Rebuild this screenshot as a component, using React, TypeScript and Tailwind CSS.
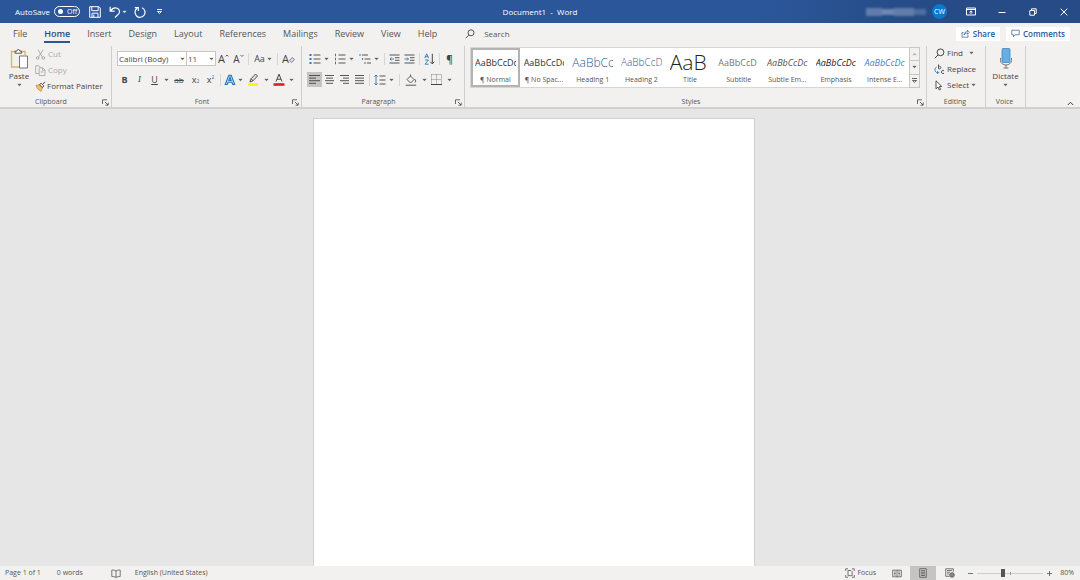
import type { ReactNode } from 'react';
import clsx from 'clsx';

interface StyleItem {
  label: string;
  sample: string;
  className: string;
}

const tabs = ['File', 'Home', 'Insert', 'Design', 'Layout', 'References', 'Mailings', 'Review', 'View', 'Help'];

const styleItems: StyleItem[] = [
  { label: '¶ Normal', sample: 'AaBbCcDc', className: 'text-[9px] text-[#333]' },
  { label: '¶ No Spac...', sample: 'AaBbCcDc', className: 'text-[9px] text-[#333]' },
  { label: 'Heading 1', sample: 'AaBbCc', className: 'text-[12px] font-light text-[#2f5c8f]' },
  { label: 'Heading 2', sample: 'AaBbCcD', className: 'text-[10px] font-light text-[#2f5c8f]' },
  { label: 'Title', sample: 'AaB', className: 'text-[21px] font-light text-[#222]' },
  { label: 'Subtitle', sample: 'AaBbCcD', className: 'text-[9px] text-[#777]' },
  { label: 'Subtle Em...', sample: 'AaBbCcDc', className: 'text-[9px] italic text-[#555]' },
  { label: 'Emphasis', sample: 'AaBbCcDc', className: 'text-[9px] italic text-[#222]' },
  { label: 'Intense E...', sample: 'AaBbCcDc', className: 'text-[9px] italic text-[#4a7ebb]' },
];

function Icon({ w = 12, h = 12, children }: { w?: number; h?: number; children: ReactNode }) {
  return (
    <svg width={w} height={h} viewBox={`0 0 ${w} ${h}`} fill="none" stroke="currentColor" className="shrink-0" aria-hidden="true">
      {children}
    </svg>
  );
}

function Caret() {
  return (
    <Icon w={5} h={4}>
      <path d="M.8 1.200h3.400L2.500 2.700z" fill="currentColor" strokeWidth=".4" />
    </Icon>
  );
}

function Tool({ label, className, children }: { label: string; className?: string; children: ReactNode }) {
  return (
    <button type="button" aria-label={label} className={clsx('flex h-[15px] shrink-0 items-center justify-center', className ?? 'w-[15px]')}>
      {children}
    </button>
  );
}

function More({ label }: { label: string }) {
  return (
    <Tool label={label} className="w-2">
      <Caret />
    </Tool>
  );
}

function Divider() {
  return <span className="mx-[2px] h-3 w-px shrink-0 bg-[#d8d6d4]" />;
}

function Group({ title, launcher, className, children }: { title: string; launcher?: boolean; className?: string; children: ReactNode }) {
  return (
    <section aria-label={title} className={clsx('flex flex-col border-r border-[#d0cecc]', className)}>
      <div className="h-[51px]">{children}</div>
      <div className="flex h-[10px] items-center pr-[2px]">
        <span className="flex-1 text-center text-[7px] leading-[10px] text-[#555]">{title}</span>
        {launcher && (
          <button type="button" aria-label={`${title} settings`}>
            <Icon w={7} h={7}>
              <path d="M.5 5V.8H5M3 3l3 3M6.200 3.500v2.700H3.500" strokeWidth=".8" />
            </Icon>
          </button>
        )}
      </div>
    </section>
  );
}

function Lines({ rows }: { rows: [number, number][] }) {
  return (
    <Icon w={11} h={11}>
      {rows.map(([x1, x2], i) => (
        <path key={i} d={`M${x1} ${1.5 + i * 2.6}H${x2}`} strokeWidth=".9" />
      ))}
    </Icon>
  );
}

function TitleBar() {
  return (
    <header className="grid h-[23px] shrink-0 grid-cols-[1fr_auto_1fr] items-center bg-linear-to-r from-[#2b579a] from-70% to-[#264b86] to-85% text-white">
      <div className="flex items-center pl-[15px]">
        <label className="flex items-center gap-1 text-[8px]">
          AutoSave
          <input type="checkbox" role="switch" className="peer sr-only" />
          <span className="flex h-[11px] w-[26px] items-center gap-1 rounded-full border border-white px-[3px] text-[7px] leading-none">
            <span className="size-[5px] shrink-0 rounded-full bg-white" />
            Off
          </span>
        </label>
        <button type="button" aria-label="Save" className="ml-[9px]">
          <Icon>
            <path d="M.7.700h9.200l1.400 1.400v9.200H.7zM2.800.7v4h6.400v-4M3 11.300V7.200h6v4.100M4.800 8.500v2.800" />
          </Icon>
        </button>
        <button type="button" aria-label="Undo" className="ml-2">
          <Icon>
            <path d="M1.200.800v4.400h4.400M1.400 5C3.300 2.200 6 1.300 8.200 2.200c2.800 1.200 2.900 4.200 1.200 6L6 11.500" strokeWidth="1.200" />
          </Icon>
        </button>
        <More label="Undo history" />
        <button type="button" aria-label="Repeat" className="ml-[5px]">
          <Icon>
            <path d="M8 1.700a5 5 0 1 1-5 .6M.8 1.600h3.500v3.500" strokeWidth="1.200" />
          </Icon>
        </button>
        <button type="button" aria-label="Customize Quick Access Toolbar" className="ml-[10px]">
          <Icon w={7} h={7}>
            <path d="M1 1.500h5M1.500 3.500h4L3.500 5.500z" strokeWidth=".9" />
          </Icon>
        </button>
      </div>
      <h1 className="text-[8px] font-medium">Document1&nbsp; -&nbsp; Word</h1>
      <div className="flex items-center justify-end">
        <div className="mr-[6px] flex h-[9px] w-[60px] items-center opacity-80 blur-[1px]" aria-hidden="true">
          <span className="h-2 w-4 bg-[#7088b3]" />
          <span className="h-[6px] w-3 bg-[#8297bd]" />
          <span className="h-2 w-5 bg-[#7189b4]" />
          <span className="h-[6px] w-3 bg-[#5a76a6]" />
        </div>
        <button type="button" className="mr-2 size-[15px] rounded-full bg-[#0b78d0] text-[7px] leading-[15px]">CW</button>
        <button type="button" aria-label="Ribbon Display Options" className="flex w-[31px] justify-center">
          <Icon w={10} h={9}>
            <path d="M.5 1h9v7h-9zM.5 2.500h9M5 7V4M3.500 5.300L5 3.900l1.500 1.400" />
          </Icon>
        </button>
        <button type="button" aria-label="Minimize" className="flex w-[31px] justify-center">
          <Icon w={8} h={8}><path d="M.5 4.500h7" /></Icon>
        </button>
        <button type="button" aria-label="Restore" className="flex w-[31px] justify-center">
          <Icon w={8} h={8}><path d="M.8 2.500h4.700v4.700H.8zM2.500 2.500V.800h4.700v4.700H5.500" /></Icon>
        </button>
        <button type="button" aria-label="Close" className="flex w-8 justify-center">
          <Icon w={8} h={8}><path d="M.7.700l6.600 6.600M7.300.700L.7 7.300" /></Icon>
        </button>
      </div>
    </header>
  );
}

function TabBar() {
  return (
    <nav className="flex h-[23px] shrink-0 items-center pr-[10px] pb-[2px] pl-[13px] text-[#555]">
      <div className="flex gap-[17px] text-[9px] leading-[14px]">
        {tabs.map((tab) => (
          <button
            key={tab}
            type="button"
            className={clsx('border-b-2 pt-[2px]', tab === 'Home' ? 'border-[#2b579a] font-semibold text-[#2b4a80]' : 'border-transparent')}
          >
            {tab}
          </button>
        ))}
      </div>
      <label className="ml-7 flex items-center gap-[9px]">
        <Icon w={10} h={10}>
          <circle cx="6" cy="3.800" r="3" />
          <path d="M3.800 6L.7 9.200" />
        </Icon>
        <input type="search" aria-label="Search" placeholder="Search" className="w-20 text-[8px] outline-none placeholder:text-[#555]" />
      </label>
      <div className="ml-auto flex gap-[6px] text-[8px] font-semibold text-[#2b579a]">
        <button type="button" className="flex h-[14px] items-center gap-[3px] bg-white px-[5px]">
          <Icon w={9} h={9}>
            <path d="M2.500 3.500H1v4.700h6V6M3 6c.2-2.300 1.500-3.300 3.500-3.300V1.200L8.500 3.400 6.500 5.300V4C5 4 4 4.500 3 6z" strokeWidth=".7" />
          </Icon>
          Share
        </button>
        <button type="button" className="flex h-[14px] items-center gap-[3px] bg-white px-[5px]">
          <Icon w={9} h={9}>
            <path d="M.8 1.200h7.400v4.600H4.300L2.500 7.700V5.800H.8z" strokeWidth=".7" />
          </Icon>
          Comments
        </button>
      </div>
    </nav>
  );
}

function ClipboardGroup() {
  return (
    <Group title="Clipboard" launcher className="w-[112px]">
      <div className="flex text-[8px] leading-[14px]">
        <button type="button" className="ml-2 flex w-[22px] flex-col items-center pt-[2px]">
          <Icon w={20} h={21}>
            <path d="M6 3.500H2.500v15.500H10M12.500 3.500H16v3.500" stroke="#d9b75a" strokeWidth="1.300" />
            <path d="M6 5.200V3.200h1.700a1.600 1.600 0 0 1 3.200 0h1.700v2z" fill="#fff" strokeWidth=".9" />
            <path d="M10.500 8h8v12h-8z" fill="#fff" stroke="#666" strokeWidth=".9" />
          </Icon>
          <span>Paste</span>
          <Caret />
        </button>
        <div className="ml-[5px] flex flex-col items-start gap-[2px] pt-px">
          <button type="button" disabled className="flex items-center gap-[2px] text-[#aaa]">
            <Icon w={11} h={11}>
              <path d="M3 .8l4.200 7M8 .8l-4.200 7" />
              <circle cx="2.700" cy="9" r="1.300" />
              <circle cx="8.300" cy="9" r="1.300" />
            </Icon>
            Cut
          </button>
          <button type="button" disabled className="flex items-center gap-[2px] text-[#aaa]">
            <Icon w={11} h={11}>
              <path d="M4 8.500H.7V.8H4l1.500 1.500M4.200 2.800h3.500l2.300 2.300v5.400H4.200zM7.500 2.800v2.500H10M5.500 7h3" strokeWidth=".9" />
            </Icon>
            Copy
          </button>
          <button type="button" className="flex items-center gap-px whitespace-nowrap">
            <Icon w={11} h={11}>
              <path d="M1 4.500l3.500-.8 3 3L6 10.300C3.500 9 2 7.500 1 4.500z" fill="#f0c070" stroke="#d8983f" />
              <path d="M4.500 3.700L6.200 2.300l2.600 2.600-1.400 1.700zM7.500 3.500L10 .8" fill="#fff" />
            </Icon>
            Format Painter
          </button>
        </div>
      </div>
    </Group>
  );
}

function FontGroup() {
  return (
    <Group title="Font" launcher className="w-[190px]">
      <div className="flex flex-col gap-[6px] pt-[5px] pl-[5px]">
        <div className="flex h-[15px] items-center">
          <div className="grid h-[15px] w-[70px] items-center border border-[#c8c6c4] bg-white">
            <select aria-label="Font" className="col-start-1 row-start-1 w-full appearance-none pl-px text-[8px] outline-none">
              <option>Calibri (Body)</option>
            </select>
            <span className="pointer-events-none col-start-1 row-start-1 mr-px justify-self-end"><Caret /></span>
          </div>
          <div className="grid h-[15px] w-[29px] items-center border border-l-0 border-[#c8c6c4] bg-white">
            <select aria-label="Font size" className="col-start-1 row-start-1 w-full appearance-none pl-px text-[8px] outline-none">
              <option>11</option>
            </select>
            <span className="pointer-events-none col-start-1 row-start-1 mr-px justify-self-end"><Caret /></span>
          </div>
          <Tool label="Increase font size">
            <span className="text-[11px] leading-none">A</span>
            <Icon w={4} h={9}><path d="M.5 2.500L2 1l1.500 1.500" strokeWidth=".8" /></Icon>
          </Tool>
          <Tool label="Decrease font size">
            <span className="text-[10px] leading-none">A</span>
            <Icon w={4} h={9}><path d="M.5 1L2 2.500 3.500 1" strokeWidth=".8" /></Icon>
          </Tool>
          <Divider />
          <Tool label="Change case" className="w-[24px] gap-[2px]">
            <span className="text-[9px] leading-none">Aa</span>
            <Caret />
          </Tool>
          <Divider />
          <Tool label="Clear all formatting" className="w-[17px]">
            <span className="text-[11px] leading-none">A</span>
            <Icon w={6} h={10}>
              <path d="M.5 6.500l2.700-3 2.300 2-2.700 3z" fill="#e4d8ea" stroke="#6f6480" strokeWidth=".8" />
            </Icon>
          </Tool>
        </div>
        <div className="flex h-[15px] items-center text-[9px] leading-none">
          <Tool label="Bold"><b>B</b></Tool>
          <Tool label="Italic"><i className="font-serif">I</i></Tool>
          <Tool label="Underline"><u>U</u></Tool>
          <More label="Underline style" />
          <Tool label="Strikethrough" className="w-[18px]"><s className="text-[8px]">ab</s></Tool>
          <Tool label="Subscript">x<sub className="text-[5px] text-[#2b6cb0]">2</sub></Tool>
          <Tool label="Superscript">x<sup className="text-[5px] text-[#2b6cb0]">2</sup></Tool>
          <Divider />
          <Tool label="Text effects" className="w-[13px]">
            <Icon w={12} h={12}>
              <path d="M1.200 10.500L4.800 1.200h2.400l3.600 9.300H8.700l-.8-2.300H4.100l-.8 2.300zM4.900 6.400h2.200L6 3.200z" fill="#c5e0f5" stroke="#2375ba" strokeWidth="1.100" />
            </Icon>
          </Tool>
          <More label="Text effect options" />
          <Tool label="Text highlight color" className="w-[18px]">
            <Icon w={12} h={13}>
              <path d="M1 11.500h10" stroke="#fff200" strokeWidth="2.600" />
              <path d="M3 9l1-3.200L8.500 1l2 2L6 7.800z" fill="#ddd" strokeWidth=".9" />
              <path d="M4 5.800l2 2" strokeWidth=".9" />
            </Icon>
          </Tool>
          <More label="Highlight options" />
          <Tool label="Font color" className="w-[17px]">
            <Icon w={12} h={13}>
              <path d="M.5 11.500h11" stroke="#e02020" strokeWidth="2.600" />
              <path d="M3 8.500L6 1.200l3 7.300M4 6.200h4" />
            </Icon>
          </Tool>
          <More label="Font color options" />
        </div>
      </div>
    </Group>
  );
}

function ListIcon({ numbered }: { numbered?: boolean }) {
  return (
    <Icon w={12} h={12}>
      {[2, 6, 10].map((y) => (
        <g key={y}>
          <path d={numbered ? `M1.500 ${y - 1.3}v2.600` : `M.5 ${y}h2`} stroke="#2b7bb0" strokeWidth={numbered ? 1 : 2} />
          <path d={`M4.500 ${y}h7`} strokeWidth=".9" />
        </g>
      ))}
    </Icon>
  );
}

function ParagraphGroup() {
  return (
    <Group title="Paragraph" launcher className="w-[163px]">
      <div className="flex flex-col gap-[6px] pt-[5px] pl-[5px]">
        <div className="flex h-[15px] items-center">
          <Tool label="Bullets"><ListIcon /></Tool>
          <More label="Bullet library" />
          <span className="w-[2px]" />
          <Tool label="Numbering"><ListIcon numbered /></Tool>
          <More label="Numbering library" />
          <span className="w-[2px]" />
          <Tool label="Multilevel list">
            <Icon w={12} h={12}>
              <path d="M1 1v2M3.500 5v2M6 9v2" stroke="#2b7bb0" />
              <path d="M3 2h6M5.500 6h6M8 10h4" strokeWidth=".9" />
            </Icon>
          </Tool>
          <More label="Multilevel library" />
          <span className="w-[2px]" />
          <Divider />
          <Tool label="Decrease indent">
            <Icon w={11} h={10}>
              <path d="M.5 1h10M6 3.700h4.500M6 6.300h4.500M.5 9h10" strokeWidth=".9" />
              <path d="M5 5H1M2.500 3.500L1 5l1.500 1.500" stroke="#2b7bb0" strokeWidth=".9" />
            </Icon>
          </Tool>
          <Tool label="Increase indent">
            <Icon w={11} h={10}>
              <path d="M.5 1h10M6 3.700h4.500M6 6.300h4.500M.5 9h10" strokeWidth=".9" />
              <path d="M.5 5h4M3 3.500L4.500 5 3 6.500" stroke="#2b7bb0" strokeWidth=".9" />
            </Icon>
          </Tool>
          <Divider />
          <Tool label="Sort">
            <Icon w={11} h={12}>
              <path d="M.7 5.200L2.700.8l2 4.400M1.500 3.700h2.500" stroke="#2b7bb0" strokeWidth=".9" />
              <path d="M1 7h3.500L1 11.200h3.700" stroke="#2b7bb0" strokeWidth=".9" />
              <path d="M8.300.8v10M6.200 8.700l2.100 2.200 2.100-2.200" />
            </Icon>
          </Tool>
          <Divider />
          <Tool label="Show formatting marks">
            <span className="text-[10px] leading-none font-semibold">¶</span>
          </Tool>
        </div>
        <div className="flex h-[15px] items-center">
          <Tool label="Align left" className="w-[15px] bg-[#c6c4c2]"><Lines rows={[[0, 11], [0, 7], [0, 11], [0, 7]]} /></Tool>
          <Tool label="Center"><Lines rows={[[1, 10], [2, 9], [1, 10], [2, 9]]} /></Tool>
          <Tool label="Align right"><Lines rows={[[1, 10], [4, 10], [1, 10], [4, 10]]} /></Tool>
          <Tool label="Justify"><Lines rows={[[1, 10], [1, 10], [1, 10], [1, 10]]} /></Tool>
          <Divider />
          <Tool label="Line spacing">
            <Icon w={12} h={12}>
              <path d="M2 1v10M.5 2.700L2 1l1.500 1.700M.5 9.300L2 11l1.500-1.700" stroke="#2b7bb0" strokeWidth=".9" />
              <path d="M5.500 2h6M5.500 6h6M5.500 10h6" strokeWidth=".9" />
            </Icon>
          </Tool>
          <More label="Line spacing options" />
          <span className="w-[2px]" />
          <Divider />
          <Tool label="Shading" className="w-[18px]">
            <Icon w={12} h={12}>
              <path d="M2 5.500L5.500 2l3.500 3.500L5.500 9zM5.500 2V.5M9.500 5c1.300 1.500 1.500 3 .5 3.500M.7 11.200h10.500" strokeWidth=".9" />
            </Icon>
          </Tool>
          <More label="Shading options" />
          <Tool label="Borders" className="w-[17px]">
            <Icon w={11} h={11}>
              <path d="M.5.500h10v10M.5.500v10M5.500.500v10M.5 5.500h10" strokeDasharray="1 1" strokeWidth=".6" />
              <path d="M0 10.500h11" />
            </Icon>
          </Tool>
          <More label="Border options" />
        </div>
      </div>
    </Group>
  );
}

function StylesGroup() {
  return (
    <Group title="Styles" launcher className="min-w-0 flex-1">
      <div className="flex h-[42px] pt-px pr-[6px] pl-[5px]">
        <div className="flex min-w-0 flex-1 border border-r-0 border-[#d8d6d4] bg-white">
          {styleItems.map((item, i) => (
            <button
              key={item.label}
              type="button"
              className={clsx('flex min-w-0 flex-1 flex-col border-2 px-[2px]', i === 0 ? 'border-[#b5b3b1]' : 'border-transparent')}
            >
              <span className={clsx('flex h-[25px] w-full items-center overflow-hidden leading-[25px] whitespace-nowrap', item.className)}>
                {item.sample}
              </span>
              <span className="w-full text-center text-[7px] leading-[10px] whitespace-nowrap text-[#555]">{item.label}</span>
            </button>
          ))}
        </div>
        <div className="flex w-[11px] flex-col divide-y divide-[#c8c6c4] border border-[#c8c6c4]">
          <button type="button" aria-label="Previous styles" className="flex flex-1 items-center justify-center text-[#aaa]">
            <Icon w={5} h={4}><path d="M.8 2.800h3.400L2.500 1.300z" fill="currentColor" strokeWidth=".4" /></Icon>
          </button>
          <button type="button" aria-label="Next styles" className="flex flex-1 items-center justify-center">
            <Caret />
          </button>
          <button type="button" aria-label="More styles" className="flex flex-1 items-center justify-center">
            <Icon w={7} h={7}><path d="M1 1.500h5M1.500 3.500h4L3.500 5.500z" strokeWidth=".8" /></Icon>
          </button>
        </div>
      </div>
    </Group>
  );
}

function EditingGroup() {
  return (
    <Group title="Editing" className="w-[59px]">
      <div className="flex flex-col items-start gap-[2px] pl-[7px] text-[8px] leading-[14px]">
        <button type="button" className="flex items-center gap-[2px]">
          <Icon w={11} h={11}>
            <circle cx="6.500" cy="4.300" r="3.400" />
            <path d="M4 7L.8 10.200" />
          </Icon>
          Find
          <span className="ml-1"><Caret /></span>
        </button>
        <button type="button" className="flex items-center gap-[2px]">
          <Icon w={11} h={11}>
            <path d="M4.500.5v4.200M4.500 3a1.300 1.300 0 1 1 0 1.300M10 6.700a1.600 1.600 0 1 0 0 2.600" strokeWidth=".9" />
            <path d="M2.500 3C.5 4.200.5 7.500 2.500 8.500h2M3.200 7l1.500 1.500L3.200 10" stroke="#2375ba" strokeWidth=".9" />
          </Icon>
          Replace
        </button>
        <button type="button" className="flex items-center gap-[2px]">
          <Icon w={11} h={11}>
            <path d="M2 .8v8l2-1.800 1.300 3 1.300-.6-1.300-2.900h2.500z" fill="#fff" strokeWidth=".9" />
          </Icon>
          Select
          <Caret />
        </button>
      </div>
    </Group>
  );
}

function VoiceGroup() {
  return (
    <Group title="Voice" className="w-10">
      <button type="button" className="flex w-full flex-col items-center pt-px text-[8px] leading-[14px]">
        <Icon w={14} h={22}>
          <path d="M1.500 11v2.500a5.500 4.500 0 0 0 11 0V11M7 18v3M4.500 21h5" stroke="#777" />
          <rect x="3" y="1.500" width="8" height="14" rx="1" fill="#67aee3" stroke="#3c87c4" strokeWidth=".8" />
        </Icon>
        Dictate
        <Caret />
      </button>
    </Group>
  );
}

function StatusBar() {
  return (
    <footer className="flex h-[14px] shrink-0 items-center bg-[#f3f1ef] pr-[6px] pl-[5px] text-[7px] text-[#555]">
      <button type="button">Page 1 of 1</button>
      <button type="button" className="ml-4">0 words</button>
      <button type="button" aria-label="Proofing" className="ml-7">
        <Icon w={10} h={9}>
          <path d="M5 2C3.500 1 2 1 .8 1v6.500C2 7.500 3.500 7.500 5 8.500c1.500-1 3-1 4.200-1V1C8 1 6.500 1 5 2zM5 2v6.500" strokeWidth=".8" />
        </Icon>
      </button>
      <button type="button" className="ml-[14px]">English (United States)</button>
      <button type="button" className="ml-auto flex items-center gap-[2px]">
        <Icon w={10} h={10}>
          <path d="M.7 3V.8H3M7 .8h2.300V3M.7 7v2.300H3M9.300 7v2.300H7M3 2.500h3l1.200 1.200v4H3z" strokeWidth=".8" />
        </Icon>
        Focus
      </button>
      <button type="button" aria-label="Read mode" className="ml-2 flex w-[26px] justify-center">
        <Icon w={10} h={9}>
          <path d="M.7 1.200h8.600v6.600H.7zM5 1.200v7M2 3h1.800M2 4.500h1.800M2 6h1.800M6.300 3H8M6.300 4.500H8M6.300 6H8" strokeWidth=".8" />
        </Icon>
      </button>
      <button type="button" aria-label="Print layout" className="flex h-[14px] w-[26px] items-center justify-center bg-[#c6c4c2]">
        <Icon w={8} h={10}>
          <path d="M.7.700h6.600v8.600H.7zM2 2.700h4M2 4.300h4M2 5.900h4M2 7.500h4" strokeWidth=".8" />
        </Icon>
      </button>
      <button type="button" aria-label="Web layout" className="flex w-[27px] justify-center">
        <Icon w={10} h={10}>
          <path d="M4.500 8.300H.7V.8h7.600v3M2 2.500h5M2 4.200h3M2 5.900h2" strokeWidth=".8" />
          <circle cx="7" cy="7" r="2.300" fill="#888" strokeWidth=".8" />
        </Icon>
      </button>
      <button type="button" aria-label="Zoom out" className="ml-1">
        <Icon w={7} h={7}><path d="M1 3.500h5" strokeWidth=".8" /></Icon>
      </button>
      <div className="mx-[3px] grid w-[66px] items-center">
        <span className="col-start-1 row-start-1 h-[3px] w-px justify-self-center bg-[#999]" />
        <input
          type="range"
          aria-label="Zoom"
          min={10}
          max={190}
          defaultValue={80}
          className="col-start-1 row-start-1 h-[9px] w-full appearance-none bg-linear-to-b from-transparent from-45% via-[#aaa] via-45% to-transparent to-55% [&::-webkit-slider-thumb]:h-2 [&::-webkit-slider-thumb]:w-1 [&::-webkit-slider-thumb]:appearance-none [&::-webkit-slider-thumb]:bg-[#555]"
        />
      </div>
      <button type="button" aria-label="Zoom in">
        <Icon w={7} h={7}><path d="M1 3.500h5M3.500 1v5" strokeWidth=".8" /></Icon>
      </button>
      <button type="button" className="ml-[7px]">80%</button>
    </footer>
  );
}

export default function App() {
  return (
    <div className="flex h-screen flex-col overflow-hidden bg-[#f3f1ef] font-['Open_Sans','Noto_Sans',sans-serif] text-[#444]">
      <TitleBar />
      <TabBar />
      <div className="flex h-[63px] shrink-0 border-b-2 border-[#d2d0ce]">
        <ClipboardGroup />
        <FontGroup />
        <ParagraphGroup />
        <StylesGroup />
        <EditingGroup />
        <VoiceGroup />
        <div className="flex w-[54px] items-end justify-end pr-[6px] pb-px">
          <button type="button" aria-label="Collapse the Ribbon">
            <Icon w={7} h={5}><path d="M.8 4l2.700-2.700L6.200 4" /></Icon>
          </button>
        </div>
      </div>
      <main className="flex min-h-0 flex-1 justify-center bg-[#e6e6e6] pt-[9px] pr-3">
        <div className="w-[442px] border border-b-0 border-[#d0d0d0] bg-white" />
      </main>
      <StatusBar />
    </div>
  );
}
